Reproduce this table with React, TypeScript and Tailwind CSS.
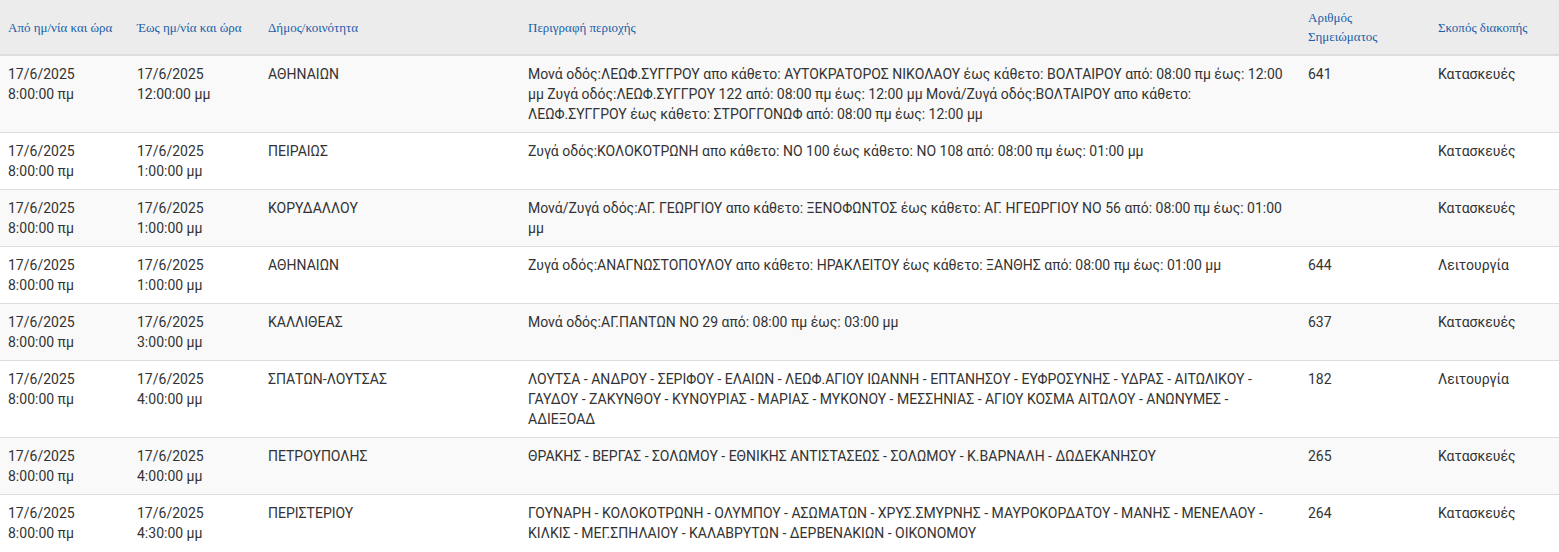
const rows = [
  {
    from: ['17/6/2025', '8:00:00 πμ'],
    to: ['17/6/2025', '12:00:00 μμ'],
    municipality: 'ΑΘΗΝΑΙΩΝ',
    description:
      'Μονά οδός:ΛΕΩΦ.ΣΥΓΓΡΟΥ απο κάθετο: ΑΥΤΟΚΡΑΤΟΡΟΣ ΝΙΚΟΛΑΟΥ έως κάθετο: ΒΟΛΤΑΙΡΟΥ από: 08:00 πμ έως: 12:00 μμ Ζυγά οδός:ΛΕΩΦ.ΣΥΓΓΡΟΥ 122 από: 08:00 πμ έως: 12:00 μμ Μονά/Ζυγά οδός:ΒΟΛΤΑΙΡΟΥ απο κάθετο: ΛΕΩΦ.ΣΥΓΓΡΟΥ έως κάθετο: ΣΤΡΟΓΓΟΝΩΦ από: 08:00 πμ έως: 12:00 μμ',
    note: '641',
    reason: 'Κατασκευές',
  },
  {
    from: ['17/6/2025', '8:00:00 πμ'],
    to: ['17/6/2025', '1:00:00 μμ'],
    municipality: 'ΠΕΙΡΑΙΩΣ',
    description: 'Ζυγά οδός:ΚΟΛΟΚΟΤΡΩΝΗ απο κάθετο: ΝΟ 100 έως κάθετο: ΝΟ 108 από: 08:00 πμ έως: 01:00 μμ',
    note: '',
    reason: 'Κατασκευές',
  },
  {
    from: ['17/6/2025', '8:00:00 πμ'],
    to: ['17/6/2025', '1:00:00 μμ'],
    municipality: 'ΚΟΡΥΔΑΛΛΟΥ',
    description:
      'Μονά/Ζυγά οδός:ΑΓ. ΓΕΩΡΓΙΟΥ απο κάθετο: ΞΕΝΟΦΩΝΤΟΣ έως κάθετο: ΑΓ. ΗΓΕΩΡΓΙΟΥ ΝΟ 56 από: 08:00 πμ έως: 01:00 μμ',
    note: '',
    reason: 'Κατασκευές',
  },
  {
    from: ['17/6/2025', '8:00:00 πμ'],
    to: ['17/6/2025', '1:00:00 μμ'],
    municipality: 'ΑΘΗΝΑΙΩΝ',
    description: 'Ζυγά οδός:ΑΝΑΓΝΩΣΤΟΠΟΥΛΟΥ απο κάθετο: ΗΡΑΚΛΕΙΤΟΥ έως κάθετο: ΞΑΝΘΗΣ από: 08:00 πμ έως: 01:00 μμ',
    note: '644',
    reason: 'Λειτουργία',
  },
  {
    from: ['17/6/2025', '8:00:00 πμ'],
    to: ['17/6/2025', '3:00:00 μμ'],
    municipality: 'ΚΑΛΛΙΘΕΑΣ',
    description: 'Μονά οδός:ΑΓ.ΠΑΝΤΩΝ ΝΟ 29 από: 08:00 πμ έως: 03:00 μμ',
    note: '637',
    reason: 'Κατασκευές',
  },
  {
    from: ['17/6/2025', '8:00:00 πμ'],
    to: ['17/6/2025', '4:00:00 μμ'],
    municipality: 'ΣΠΑΤΩΝ-ΛΟΥΤΣΑΣ',
    description:
      'ΛΟΥΤΣΑ - ΑΝΔΡΟΥ - ΣΕΡΙΦΟΥ - ΕΛΑΙΩΝ - ΛΕΩΦ.ΑΓΙΟΥ ΙΩΑΝΝΗ - ΕΠΤΑΝΗΣΟΥ - ΕΥΦΡΟΣΥΝΗΣ - ΥΔΡΑΣ - ΑΙΤΩΛΙΚΟΥ - ΓΑΥΔΟΥ - ΖΑΚΥΝΘΟΥ - ΚΥΝΟΥΡΙΑΣ - ΜΑΡΙΑΣ - ΜΥΚΟΝΟΥ - ΜΕΣΣΗΝΙΑΣ - ΑΓΙΟΥ ΚΟΣΜΑ ΑΙΤΩΛΟΥ - ΑΝΩΝΥΜΕΣ - ΑΔΙΕΞΟΑΔ',
    note: '182',
    reason: 'Λειτουργία',
  },
  {
    from: ['17/6/2025', '8:00:00 πμ'],
    to: ['17/6/2025', '4:00:00 μμ'],
    municipality: 'ΠΕΤΡΟΥΠΟΛΗΣ',
    description: 'ΘΡΑΚΗΣ - ΒΕΡΓΑΣ - ΣΟΛΩΜΟΥ - ΕΘΝΙΚΗΣ ΑΝΤΙΣΤΑΣΕΩΣ - ΣΟΛΩΜΟΥ - Κ.ΒΑΡΝΑΛΗ - ΔΩΔΕΚΑΝΗΣΟΥ',
    note: '265',
    reason: 'Κατασκευές',
  },
  {
    from: ['17/6/2025', '8:00:00 πμ'],
    to: ['17/6/2025', '4:30:00 μμ'],
    municipality: 'ΠΕΡΙΣΤΕΡΙΟΥ',
    description:
      'ΓΟΥΝΑΡΗ - ΚΟΛΟΚΟΤΡΩΝΗ - ΟΛΥΜΠΟΥ - ΑΣΩΜΑΤΩΝ - ΧΡΥΣ.ΣΜΥΡΝΗΣ - ΜΑΥΡΟΚΟΡΔΑΤΟΥ - ΜΑΝΗΣ - ΜΕΝΕΛΑΟΥ - ΚΙΛΚΙΣ - ΜΕΓ.ΣΠΗΛΑΙΟΥ - ΚΑΛΑΒΡΥΤΩΝ - ΔΕΡΒΕΝΑΚΙΩΝ - ΟΙΚΟΝΟΜΟΥ',
    note: '264',
    reason: 'Κατασκευές',
  },
]

const headers = [
  'Από ημ/νία και ώρα',
  'Έως ημ/νία και ώρα',
  'Δήμος/κοινότητα',
  'Περιγραφή περιοχής',
  'Αριθμός Σημειώματος',
  'Σκοπός διακοπής',
]

export default function App() {
  return (
    <div className="min-h-screen bg-white">
      <table className="w-full table-fixed border-collapse font-['Roboto',sans-serif] text-[14px] leading-[20px] text-[#333]">
        <colgroup>
          <col className="w-[129px]" />
          <col className="w-[131px]" />
          <col className="w-[260px]" />
          <col className="w-[780px]" />
          <col className="w-[130px]" />
          <col />
        </colgroup>
        <thead>
          <tr className="bg-[#ececec]">
            {headers.map((h) => (
              <th
                key={h}
                className="border-b-2 border-[#dddddd] p-2 text-left align-middle font-['Liberation_Serif',serif] text-[13px] font-normal leading-[19px] text-[#1a5ea8]"
              >
                {h}
              </th>
            ))}
          </tr>
        </thead>
        <tbody>
          {rows.map((r, i) => (
            <tr key={i} className={i % 2 === 0 ? 'bg-[#f9f9f9]' : 'bg-white'}>
              <td className="border-t border-[#dddddd] p-2 align-top">
                {r.from[0]}
                <br />
                {r.from[1]}
              </td>
              <td className="border-t border-[#dddddd] p-2 align-top">
                {r.to[0]}
                <br />
                {r.to[1]}
              </td>
              <td className="border-t border-[#dddddd] p-2 align-top">{r.municipality}</td>
              <td className="border-t border-[#dddddd] p-2 align-top">{r.description}</td>
              <td className="border-t border-[#dddddd] p-2 align-top">{r.note}</td>
              <td className="border-t border-[#dddddd] p-2 align-top">{r.reason}</td>
            </tr>
          ))}
        </tbody>
      </table>
    </div>
  )
}
